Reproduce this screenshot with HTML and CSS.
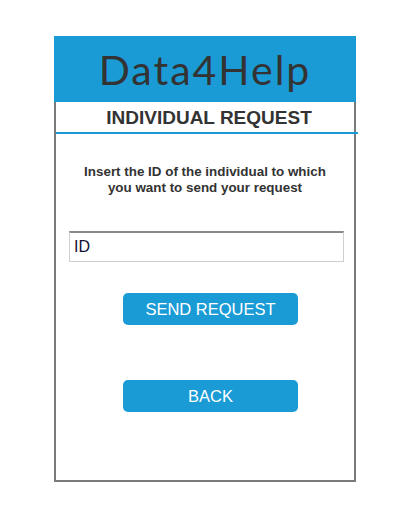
FILE: index.html
```html
<!DOCTYPE html>
<html>
<head>
<meta charset="utf-8">
<link rel="stylesheet" href="styles.css">
</head>
<body>
<div class="frame">
  <div class="brand">Data4Help</div>
  <div class="title">INDIVIDUAL REQUEST</div>
  <div class="content">
    <p class="instr">Insert the ID of the individual to which<br>you want to send your request</p>
    <input class="idfield" type="text" value="ID">
    <button class="btn send">SEND REQUEST</button>
    <button class="btn back">BACK</button>
  </div>
</div>
</body>
</html>
```
FILE: styles.css
```css
html, body { margin: 0; padding: 0; background: #fff; }
body { font-family: "Liberation Sans", Arial, sans-serif; }
.frame {
  margin: 36px 0 0 54px;
  width: 298px;
  height: 444px;
  border: 2px solid #7a7a7a;
  border-top: none;
  box-sizing: content-box;
  display: flex;
  flex-direction: column;
}
.brand {
  margin: 0 -2px;
  height: 66px;
  background: #1a9bd6;
  color: #333;
  font-family: Lato, sans-serif;
  font-weight: 400;
  font-size: 41px;
  letter-spacing: 2px;
  display: flex;
  align-items: center;
  justify-content: center;
  padding-top: 1px;
  box-sizing: border-box;
}
.title {
  height: 32px;
  border-bottom: 2px solid #1a9bd6;
  margin-right: -4px;
  color: #333;
  font-weight: bold;
  font-size: 19px;
  display: flex;
  align-items: center;
  justify-content: center;
  padding-left: 4px;
  padding-top: 1px;
  box-sizing: border-box;
}
.content {
  display: flex;
  flex-direction: column;
  align-items: center;
}
.instr {
  margin: 30px 0 0;
  text-align: center;
  color: #333;
  font-weight: bold;
  font-size: 13.4px;
  line-height: 16px;
}
.idfield {
  margin-top: 35px;
  margin-left: 3px;
  width: 275px;
  height: 31px;
  box-sizing: border-box;
  border: 1px solid #cfcfcf;
  border-top: 2px solid #8a8a8a;
  padding: 0 4px;
  font-family: "Liberation Sans", Arial, sans-serif;
  font-size: 16px;
  color: #111133;
  outline: none;
}
.btn {
  width: 175px;
  height: 32px;
  border: none;
  border-radius: 5px;
  background: #1a9bd6;
  color: #fff;
  font-family: "Liberation Sans", Arial, sans-serif;
  font-size: 16.5px;
  padding: 0;
}
.send { margin-top: 31px; margin-left: 11px; }
.back { margin-top: 55px; margin-left: 11px; }
```
